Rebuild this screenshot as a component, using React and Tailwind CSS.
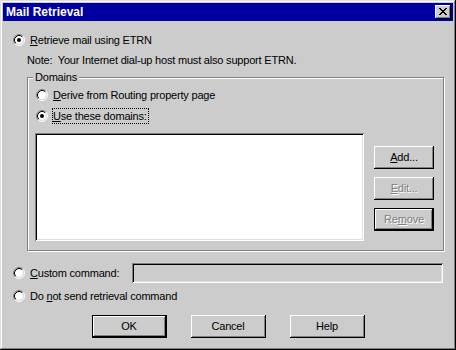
const raised = 'shadow-[inset_-1px_-1px_#000,inset_1px_1px_#fff,inset_-2px_-2px_#808080]'
const sunken = 'shadow-[inset_1px_1px_#808080,inset_-1px_-1px_#fff,inset_2px_2px_#000,inset_-2px_-2px_#dfdfdf]'
const grayText = 'text-[#808080] [text-shadow:1px_1px_0_#fff]'

function Radio({ checked }) {
  return (
    <svg width="12" height="12" viewBox="0 0 12 12" className="shrink-0">
      <circle cx="6" cy="6" r="4" fill="#fff" />
      <path d="M2.11 9.89A5.5 5.5 0 0 1 9.89 2.11" fill="none" stroke="#808080" />
      <path d="M9.89 2.11A5.5 5.5 0 0 1 2.11 9.89" fill="none" stroke="#fff" />
      <path d="M2.82 9.18A4.5 4.5 0 0 1 9.18 2.82" fill="none" stroke="#000" />
      <path d="M9.18 2.82A4.5 4.5 0 0 1 2.82 9.18" fill="none" stroke="#dfdfdf" />
      {checked && <circle cx="6" cy="6" r="2" fill="#000" />}
    </svg>
  )
}

function CloseGlyph() {
  // 8x7 pixel X, as drawn on the caption button
  const px = [
    [0, 0, 2], [6, 0, 2],
    [1, 1, 2], [5, 1, 2],
    [2, 2, 4],
    [3, 3, 2],
    [2, 4, 4],
    [1, 5, 2], [5, 5, 2],
    [0, 6, 2], [6, 6, 2],
  ]
  return (
    <svg width="8" height="7" viewBox="0 0 8 7" shapeRendering="crispEdges">
      {px.map(([x, y, w], i) => <rect key={i} x={x} y={y} width={w} height="1" fill="#000" />)}
    </svg>
  )
}

function Btn({ children, def, disabled, className = '' }) {
  return (
    <button
      className={`flex items-center justify-center bg-[#cccccc] ${raised} ${def ? 'border border-black' : ''} ${disabled ? grayText : ''} ${className}`}
    >
      {children}
    </button>
  )
}

export default function App() {
  return (
    <div className="w-[456px] h-[350px] bg-[#cccccc] p-[3px] flex flex-col text-[11px] leading-[13px] tracking-[-0.2px] text-black [font-family:'Liberation_Sans',Arial,sans-serif] shadow-[inset_-1px_-1px_#000,inset_1px_1px_#dfdfdf,inset_-2px_-2px_#808080,inset_2px_2px_#fff]">
      {/* Caption */}
      <div className="h-[18px] bg-[#0000a0] flex items-center pl-[3px] pr-[2px]">
        <span className="text-white font-bold text-[12px] tracking-normal">Mail Retrieval</span>
        <div className={`ml-auto w-[16px] h-[14px] bg-[#cccccc] pt-[3px] pl-[4px] ${raised}`}>
          <CloseGlyph />
        </div>
      </div>

      <div className="flex items-center h-[16px] mt-[11px] pl-[10px]">
        <Radio checked />
        <span className="ml-[5px]"><u>R</u>etrieve mail using ETRN</span>
      </div>
      <div className="h-[16px] mt-[4px] pl-[24px] flex items-center whitespace-pre">
        Note:  Your Internet dial-up host must also support ETRN.
      </div>

      {/* Domains group */}
      <div className="relative mt-[9px] ml-[24px] w-[417px] h-[174px] border border-[#808080] shadow-[inset_1px_1px_#fff,1px_1px_#fff]">
        <span className="absolute left-[5px] top-[-7px] px-[2px] bg-[#cccccc]">Domains</span>
        <div className="flex items-center h-[16px] mt-[9px] pl-[8px]">
          <Radio />
          <span className="ml-[4px] h-[16px] pr-[1px] flex items-center border border-transparent">
            <span><u>D</u>erive from Routing property page</span>
          </span>
        </div>
        <div className="flex items-center h-[16px] mt-[5px] pl-[8px]">
          <Radio checked />
          <span className="ml-[4px] h-[16px] pr-[1px] flex items-center border border-dotted border-black">
            <span><u>U</u>se these domains:</span>
          </span>
        </div>
        <div className="flex mt-[9px] pl-[7px]">
          <div className={`w-[329px] h-[108px] bg-white ${sunken}`} />
          <div className="ml-[10px] pt-[13px] flex flex-col gap-[8px]">
            <Btn className="w-[60px] h-[23px]"><span><u>A</u>dd...</span></Btn>
            <Btn className="w-[60px] h-[23px]" disabled><span><u>E</u>dit...</span></Btn>
            <Btn className="w-[60px] h-[23px]" def disabled><span>Re<u>m</u>ove</span></Btn>
          </div>
        </div>
      </div>

      <div className="flex items-center h-[20px] mt-[12px] pl-[10px] pr-[10px]">
        <Radio />
        <span className="ml-[5px]"><u>C</u>ustom command:</span>
        <div className={`ml-auto w-[311px] h-[20px] bg-[#cccccc] ${sunken}`} />
      </div>
      <div className="flex items-center h-[16px] mt-[5px] pl-[10px]">
        <Radio />
        <span className="ml-[5px]">Do <u>n</u>ot send retrieval command</span>
      </div>

      <div className="flex justify-center gap-[24px] mt-[11px]">
        <Btn className="w-[75px] h-[23px]" def>OK</Btn>
        <Btn className="w-[75px] h-[23px]">Cancel</Btn>
        <Btn className="w-[75px] h-[23px]">Help</Btn>
      </div>
    </div>
  )
}
